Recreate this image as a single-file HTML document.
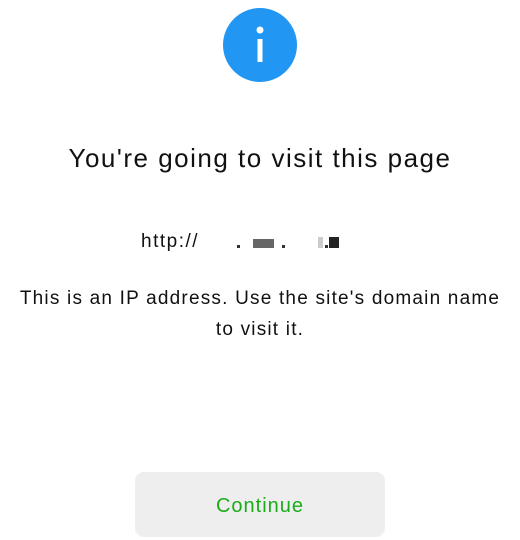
<!DOCTYPE html>
<html><head><meta charset="utf-8"><style>
html,body{margin:0;padding:0;background:#fff;width:520px;height:539px;overflow:hidden;font-family:"Liberation Sans","DejaVu Sans",sans-serif;color:#111;}
.icon{position:absolute;left:223px;top:8px;}
.title{position:absolute;top:143px;left:0;width:520px;text-align:center;font-size:26px;letter-spacing:1.5px;}
.url{position:absolute;top:231px;left:141px;font-size:19px;letter-spacing:1.5px;height:24px;}
.url span{position:absolute;top:0;}
.msg{position:absolute;top:283px;left:0;width:520px;text-align:center;font-size:19px;letter-spacing:1.2px;line-height:31px;}
.btn{position:absolute;left:135px;top:472px;width:250px;height:65px;background:#eeeeee;border-radius:9px;color:#1aad19;font-size:20px;letter-spacing:1px;text-align:center;line-height:68px;}
</style></head><body>
<svg class="icon" width="74" height="74" viewBox="0 0 74 74"><circle cx="37" cy="37" r="37" fill="#2196f3"/><circle cx="37" cy="22" r="3.5" fill="#fff"/><rect x="34.5" y="31" width="5" height="23" fill="#fff"/></svg>
<div class="title">You're going to visit this page</div>
<div class="url"><span style="left:0">http://</span>
<span style="left:96px;top:14px;width:3px;height:3px;background:#333"></span>
<span style="left:112px;top:8px;width:21px;height:9px;background:#666"></span>
<span style="left:141px;top:14px;width:3px;height:3px;background:#333"></span>
<span style="left:177px;top:6px;width:5px;height:11px;background:#ccc"></span>
<span style="left:184px;top:14px;width:3px;height:3px;background:#333"></span>
<span style="left:188px;top:6px;width:10px;height:11px;background:#222"></span>
</div>
<div class="msg">This is an IP address. Use the site's domain name<br>to visit it.</div>
<div class="btn">Continue</div>
</body></html>
